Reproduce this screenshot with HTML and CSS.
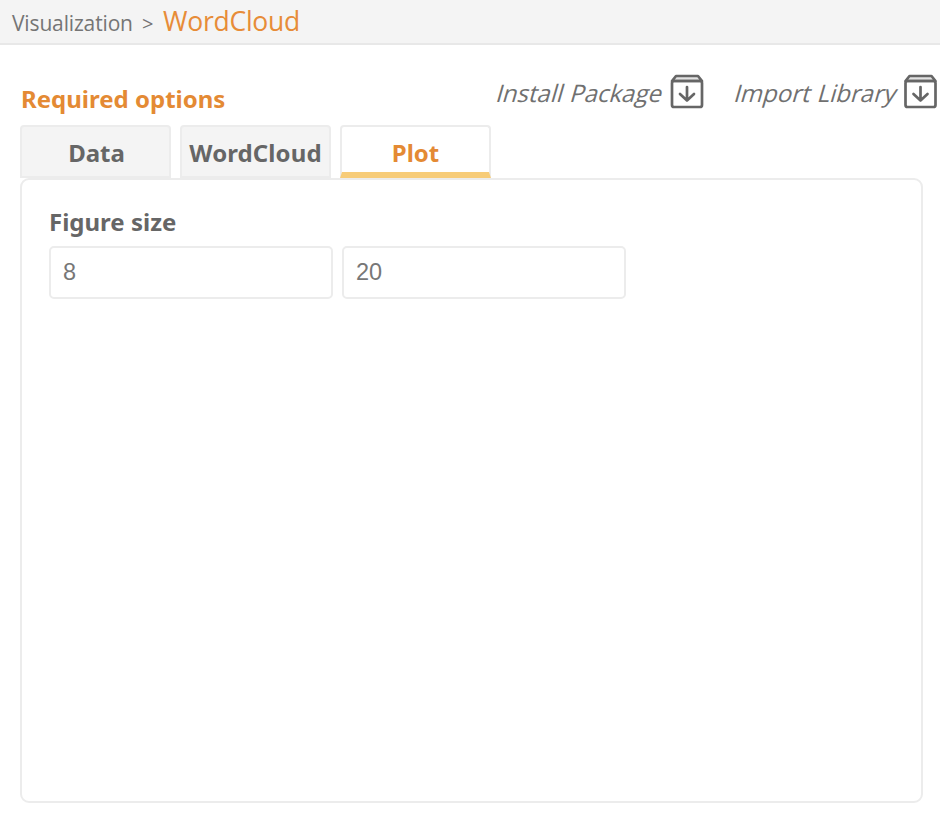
FILE: index.html
```html
<!DOCTYPE html>
<html lang="en">
<head>
<meta charset="utf-8">
<title>WordCloud</title>
<link rel="stylesheet" href="styles.css">
</head>
<body>
<header class="breadcrumb">
  <span class="crumb">Visualization</span><span class="sep">&gt;</span><span class="current">WordCloud</span>
</header>
<main class="page">
  <div class="toolbar">
    <h1 class="title">Required options</h1>
    <div class="action install"><span class="label">Install Package</span>
      <svg class="icon" viewBox="0 0 34 36"><path class="lid" d="M2.500 7.500 6.500 2.500H28.500L32.500 7.500Z"/><rect x="2.500" y="7.500" width="30" height="26" rx="2"/><path d="M17.500 13.500V27M10.500 20.500 17.500 27 24.500 20.500"/></svg>
    </div>
    <div class="action import"><span class="label">Import Library</span>
      <svg class="icon" viewBox="0 0 34 36"><path class="lid" d="M2.500 7.500 6.500 2.500H28.500L32.500 7.500Z"/><rect x="2.500" y="7.500" width="30" height="26" rx="2"/><path d="M17.500 13.500V27M10.500 20.500 17.500 27 24.500 20.500"/></svg>
    </div>
  </div>
  <nav class="tabs">
    <div class="tab data">Data</div>
    <div class="tab cloud">WordCloud</div>
    <div class="tab active">Plot</div>
  </nav>
  <section class="panel">
    <h2 class="field-label">Figure size</h2>
    <div class="fields">
      <input class="field" type="text" value="8">
      <input class="field" type="text" value="20">
    </div>
  </section>
</main>
</body>
</html>
```

FILE: styles.css
```css
* { box-sizing: border-box; }
body { margin: 0; width: 940px; height: 822px; overflow: hidden; background: #fff; color: #666; font-family: "Noto Sans", "Open Sans", sans-serif; }
.breadcrumb { display: flex; align-items: baseline; height: 45px; padding-left: 12px; background: #f4f4f4; border-bottom: 2px solid #e8e8e8; line-height: 43px; white-space: nowrap; font-family: "Open Sans", "Noto Sans", sans-serif; color: #757575; }
.crumb { width: 130px; font-size: 21px; letter-spacing: -0.150px; }
.sep { width: 21px; font-size: 20px; }
.current { font-size: 26.5px; letter-spacing: -0.250px; color: #e78c38; }
.page { padding: 0 17px 0 21px; }
.toolbar { display: flex; height: 80px; width: 919px; white-space: nowrap; }
.title { width: 475px; margin: 37px 0 0; font-size: 24px; line-height: 34px; font-weight: 700; color: #e48a34; }
.action { display: flex; margin-top: 29px; height: 36px; }
.install { width: 238px; }
.label { width: 173px; font-family: "Open Sans", sans-serif; font-size: 24px; line-height: 38px; word-spacing: 1px; color: #707070; transform: translateX(1.5px) skewX(-16deg); }
.import .label { width: 168px; }
.icon { flex: none; width: 34px; height: 36px; fill: none; stroke: #666; stroke-width: 2.700; stroke-linejoin: round; stroke-linecap: round; overflow: visible; transform: translate(0.5px, -0.5px); }
.import .icon { transform: translate(1px, -0.5px); }
.lid { fill: #e3e3e3; }
.tabs { display: flex; gap: 9px; height: 54px; margin-left: -1px; }
.tab { display: flex; justify-content: center; width: 151px; height: 53px; border: 2px solid #ececec; border-radius: 4px 4px 0 0; background: #f4f4f4; font-size: 24px; font-weight: 700; line-height: 52px; }
.data { padding-left: 2px; }
.cloud { letter-spacing: 0.100px; }
.active { background: #fff; border-bottom: 6px solid #f7cc78; color: #e48a34; }
.panel { width: 903px; height: 625px; margin: -1px 0 0 -1px; border: 2px solid #ececec; border-radius: 9px; padding: 25px 26px 0 27px; }
.field-label { margin: 0; height: 41px; font-size: 24px; line-height: 34px; font-weight: 700; }
.fields { display: flex; gap: 9px; }
.field { width: 284px; height: 53px; border: 2px solid #ececec; border-radius: 5px; padding: 0 12px; background: #fff; color: #777; font: 23.500px "Liberation Sans", Arial, sans-serif; }
```
